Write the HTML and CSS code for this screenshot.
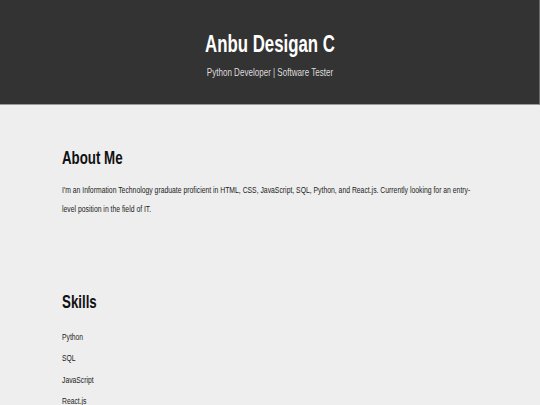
FILE: index.html
```html
<!DOCTYPE html>
<html lang="en">
<head>
<meta charset="utf-8">
<title>Anbu Desigan C</title>
<link rel="stylesheet" href="styles.css">
</head>
<body>
<div class="page">
  <header class="site-header">
    <h1 class="name">Anbu Desigan C</h1>
    <p class="role">Python Developer | Software Tester</p>
  </header>
  <main class="content">
    <section class="section about">
      <h2 class="section-title">About Me</h2>
      <p class="about-text">I'm an Information Technology graduate proficient in HTML, CSS, JavaScript, SQL, Python, and React.js. Currently looking for an entry-level position in the field of IT.</p>
    </section>
    <section class="section skills">
      <h2 class="section-title">Skills</h2>
      <ul class="skill-list">
        <li>Python</li>
        <li>SQL</li>
        <li>JavaScript</li>
        <li>React.js</li>
      </ul>
    </section>
  </main>
</div>
</body>
</html>
```
FILE: styles.css
```css
html, body {
  margin: 0;
  padding: 0;
}
html {
  overflow: hidden;
  background: #eeeeee;
}
body {
  background: #eeeeee;
  color: #222222;
  font-family: "Liberation Sans", Arial, Helvetica, sans-serif;
}
/* the design uses a condensed face: emulate it by compressing the page horizontally */
.page {
  width: 771.4px;
  transform: scaleX(0.7);
  transform-origin: 0 0;
}
.site-header {
  background: #333333;
  color: #ffffff;
  text-align: center;
  padding: 30px 20px 25px;
  border-bottom: 1px solid #9a9a9a;
}
.name {
  margin: 0;
  font-size: 24px;
  line-height: 28px;
  font-weight: bold;
}
.role {
  margin: 7px 0 0;
  font-size: 11.5px;
  line-height: 14px;
  color: #dddddd;
}
.content {
  padding: 42px 0 0 88.6px;
  width: 596px;
}
.section-title {
  margin: 0;
  font-size: 19px;
  line-height: 22px;
  font-weight: bold;
  color: #111111;
}
.about-text {
  margin: 11px 0 0;
  font-size: 9.75px;
  line-height: 19px;
}
.skills {
  margin-top: 73px;
}
.skill-list {
  list-style: none;
  margin: 13px 0 0;
  padding: 0;
  font-size: 9.7px;
  line-height: 21.3px;
}
```
